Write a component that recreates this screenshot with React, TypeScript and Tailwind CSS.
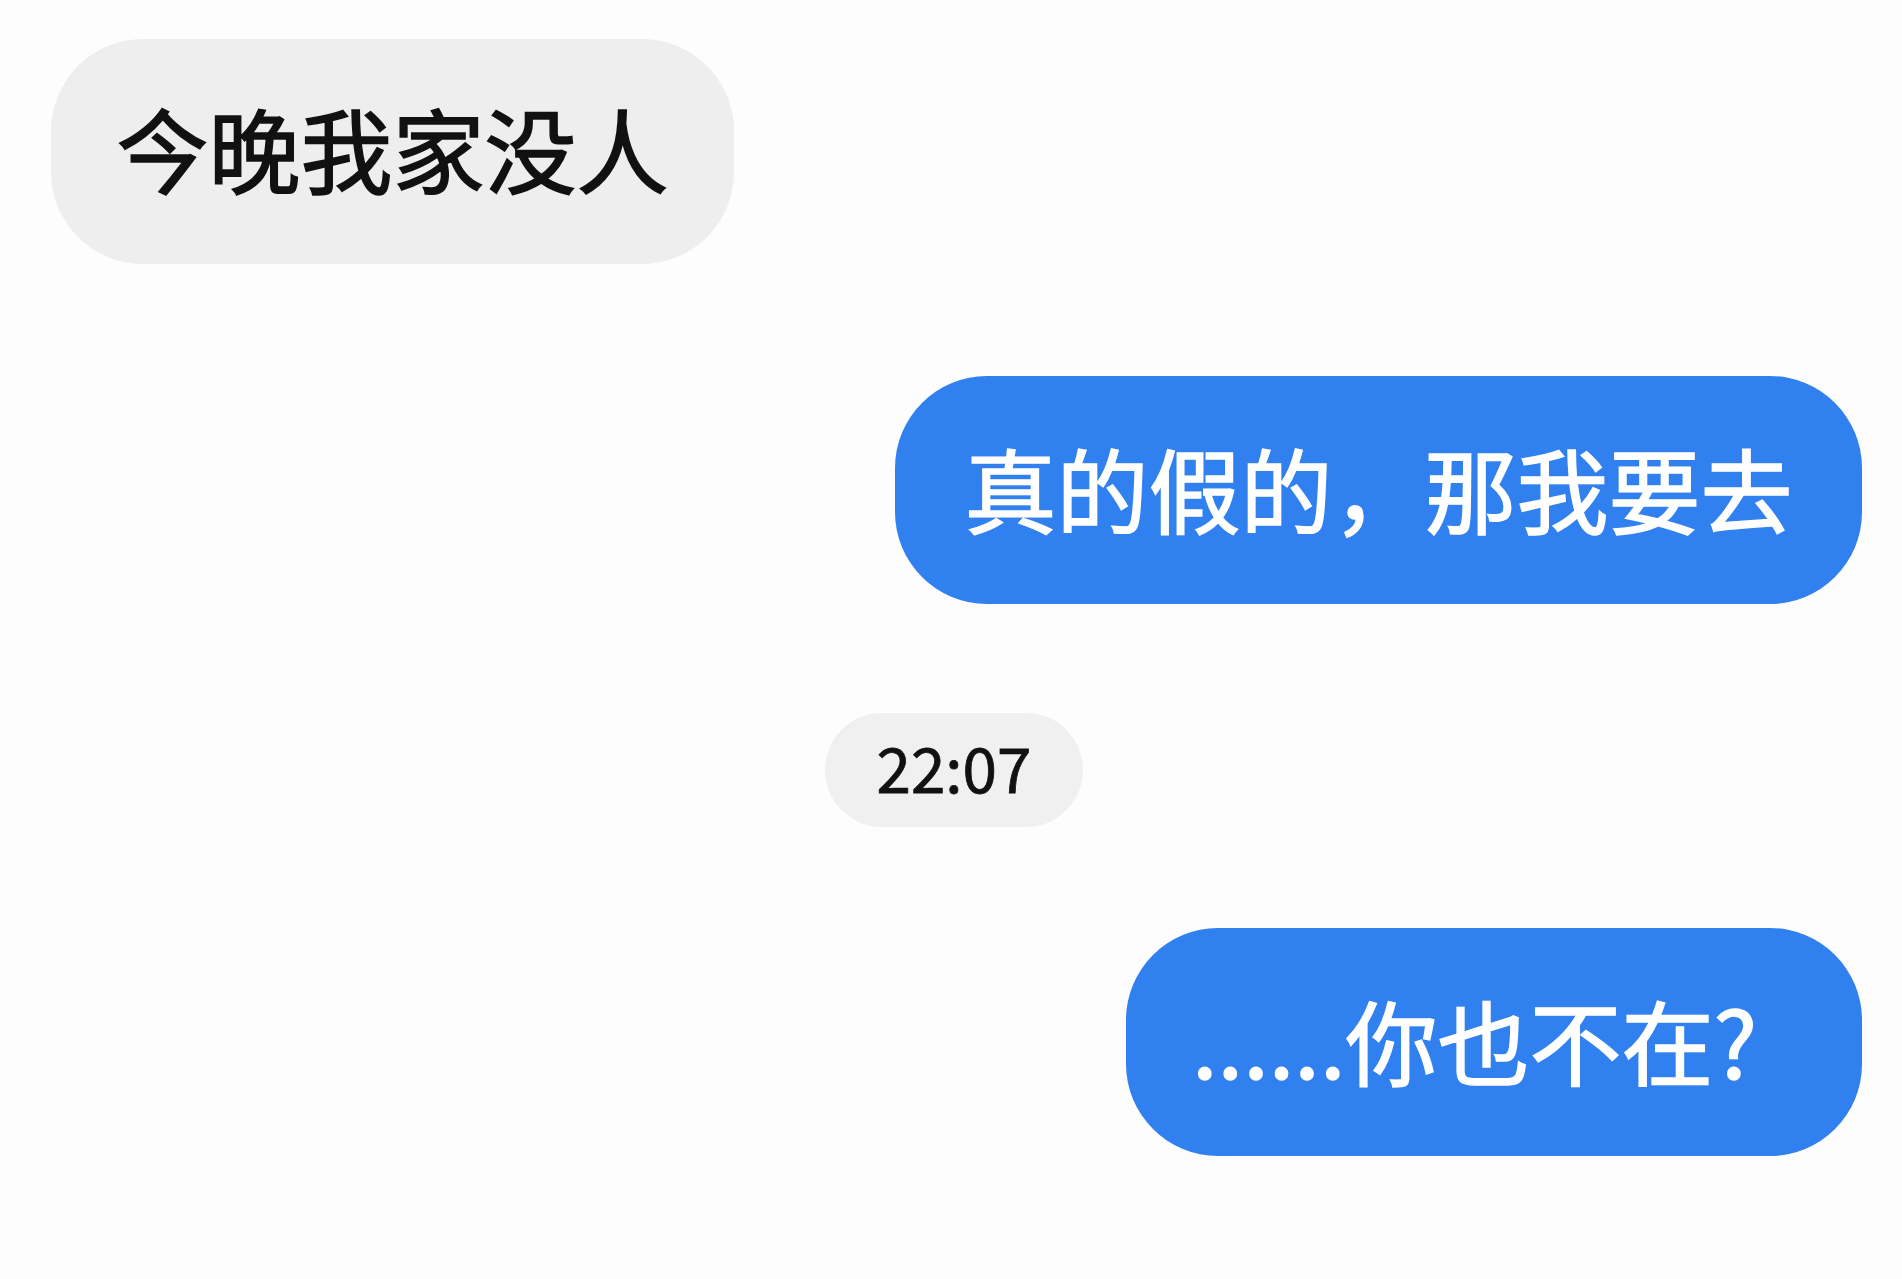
import React from "react";

const font = { fontFamily: '"Noto Sans CJK SC", "Noto Sans", sans-serif' };

export default function App() {
  return (
    <div
      className="w-[1902px] h-[1279px] bg-[#fdfdfd] flex flex-col pt-[39px] pl-[51px] pr-[40px] overflow-hidden"
      style={font}
    >
      <div className="self-start w-[683px] h-[225px] rounded-[92px] bg-[#eeeeee] flex items-center justify-center pb-[10px] text-[92px] leading-none text-[#111111] [-webkit-text-stroke:1.5px_#111111]">
        今晚我家没人
      </div>
      <div className="self-end mt-[112px] w-[967px] h-[228px] rounded-[92px] bg-[#3080ef] flex items-center justify-center pb-[6px] text-[92px] leading-none text-white [-webkit-text-stroke:1.5px_white]">
        真的假的，那我要去
      </div>
      <div className="self-start ml-[774px] mt-[109px] w-[258px] h-[114px] rounded-full bg-[#f0f0f0] flex items-center justify-center pb-[8px] text-[62px] leading-none text-[#111111] [-webkit-text-stroke:0.8px_#111111]">
        22:07
      </div>
      <div className="self-end mt-[101px] w-[736px] h-[228px] rounded-[92px] bg-[#3080ef] flex items-center justify-start pl-[66px] pb-[6px] text-[92px] leading-none text-white [-webkit-text-stroke:1.5px_white]">
        ......你也不在?
      </div>
    </div>
  );
}
